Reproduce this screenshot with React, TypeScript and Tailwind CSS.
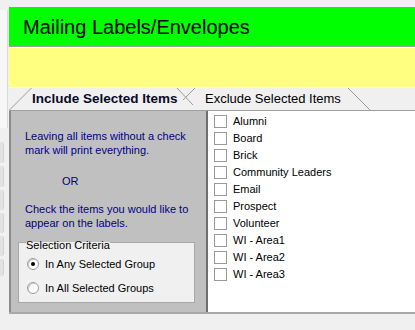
import React from "react";

const groups = [
  "Alumni",
  "Board",
  "Brick",
  "Community Leaders",
  "Email",
  "Prospect",
  "Volunteer",
  "WI - Area1",
  "WI - Area2",
  "WI - Area3",
];

const Radio: React.FC<{ checked?: boolean; label: string }> = ({ checked, label }) => (
  <div className="flex items-center h-[24px] pl-[1px]">
    <span className="flex items-center justify-center w-[12px] h-[12px] rounded-full border border-[#9a9a9a] bg-white shadow-[inset_1px_1px_0_#d0d0d0]">
      {checked && <span className="w-[4px] h-[4px] rounded-full bg-black" />}
    </span>
    <span className="ml-[6px] text-[11px] text-black">{label}</span>
  </div>
);

const App: React.FC = () => {
  return (
    <div className="w-[415px] h-[330px] overflow-hidden bg-[#f0f0f0] flex font-['Liberation_Sans',Arial,sans-serif]">
      {/* left edge of neighbouring window */}
      <div className="w-[9px] shrink-0 flex flex-col">
        <div className="mt-[10px] h-[118px] w-[8px] bg-[#f7f7f7] border-r border-[#dadada]" />
        <div className="mt-[14px] flex flex-col gap-[3px]">
          {[21, 21, 20, 20, 20, 17].map((h, i) => (
            <div key={i} className="w-[4px] rounded-r-[3px] bg-[#e2e2e2] border-r border-[#d2d2d2]" style={{ height: h }} />
          ))}
        </div>
      </div>

      <div className="flex-1 flex flex-col pt-[7px]">
        <div className="h-[40px] bg-[#00ff00] border-b border-[#a0a0a0] flex items-center pl-[14px]">
          <span className="text-[20px] text-black leading-none">Mailing Labels/Envelopes</span>
        </div>
        <div className="h-[41px] bg-[#ffff80] border-t border-white border-b border-[#a0a0a0]" />

        {/* tabs */}
        <div className="relative h-[22px] flex items-center">
          <svg className="absolute inset-0" width="406" height="22">
            <line x1="0" y1="22.5" x2="22.5" y2="0" stroke="#9a9a9a" />
            <line x1="168" y1="0" x2="184" y2="17" stroke="#9a9a9a" />
            <line x1="186" y1="0" x2="174" y2="12" stroke="#9a9a9a" />
            <line x1="339" y1="0" x2="361" y2="22" stroke="#9a9a9a" />
          </svg>
          <div className="relative w-[187px] pl-[23px] text-[13.5px] font-bold text-[#0a0a28]">Include Selected Items</div>
          <div className="relative pl-[9px] text-[13px] text-black">Exclude Selected Items</div>
        </div>

        {/* panel */}
        <div className="flex h-[204px] border-t border-[#a0a0a0] border-b-2 border-b-[#a8a8a8]">
          <div className="w-[199px] shrink-0 bg-[#c0c0c0] border-l-2 border-[#8c8c8c] border-r-2 border-r-[#6e6e6e] flex flex-col">
            <div className="pt-[18px] pl-[14px] text-[11px] leading-[14px] text-[#000080]">
              <p>Leaving all items without a check<br />mark will print everything.</p>
              <p className="mt-[17px] pl-[37px]">OR</p>
              <p className="mt-[14px]">Check the items you would like to<br />appear on the labels.</p>
            </div>
            <fieldset className="mt-[3px] ml-[7px] w-[177px] h-[70px] border border-[#a8a8a8] bg-[#f0f0f0] px-[7px]">
              <legend className="text-[11px] leading-[13px] text-black px-0 pt-[6px]">Selection Criteria</legend>
              <div>
                <Radio checked label="In Any Selected Group" />
                <Radio label="In All Selected Groups" />
              </div>
            </fieldset>
          </div>

          <div className="flex-1 bg-white pl-[6px] pt-[2px]">
            {groups.map((g) => (
              <div key={g} className="flex items-center h-[17px]">
                <span className="w-[13px] h-[13px] border border-[#9a9a9a] bg-white shrink-0" />
                <span className="ml-[6px] text-[11px] text-black">{g}</span>
              </div>
            ))}
          </div>
        </div>
      </div>
    </div>
  );
};

export default App;
